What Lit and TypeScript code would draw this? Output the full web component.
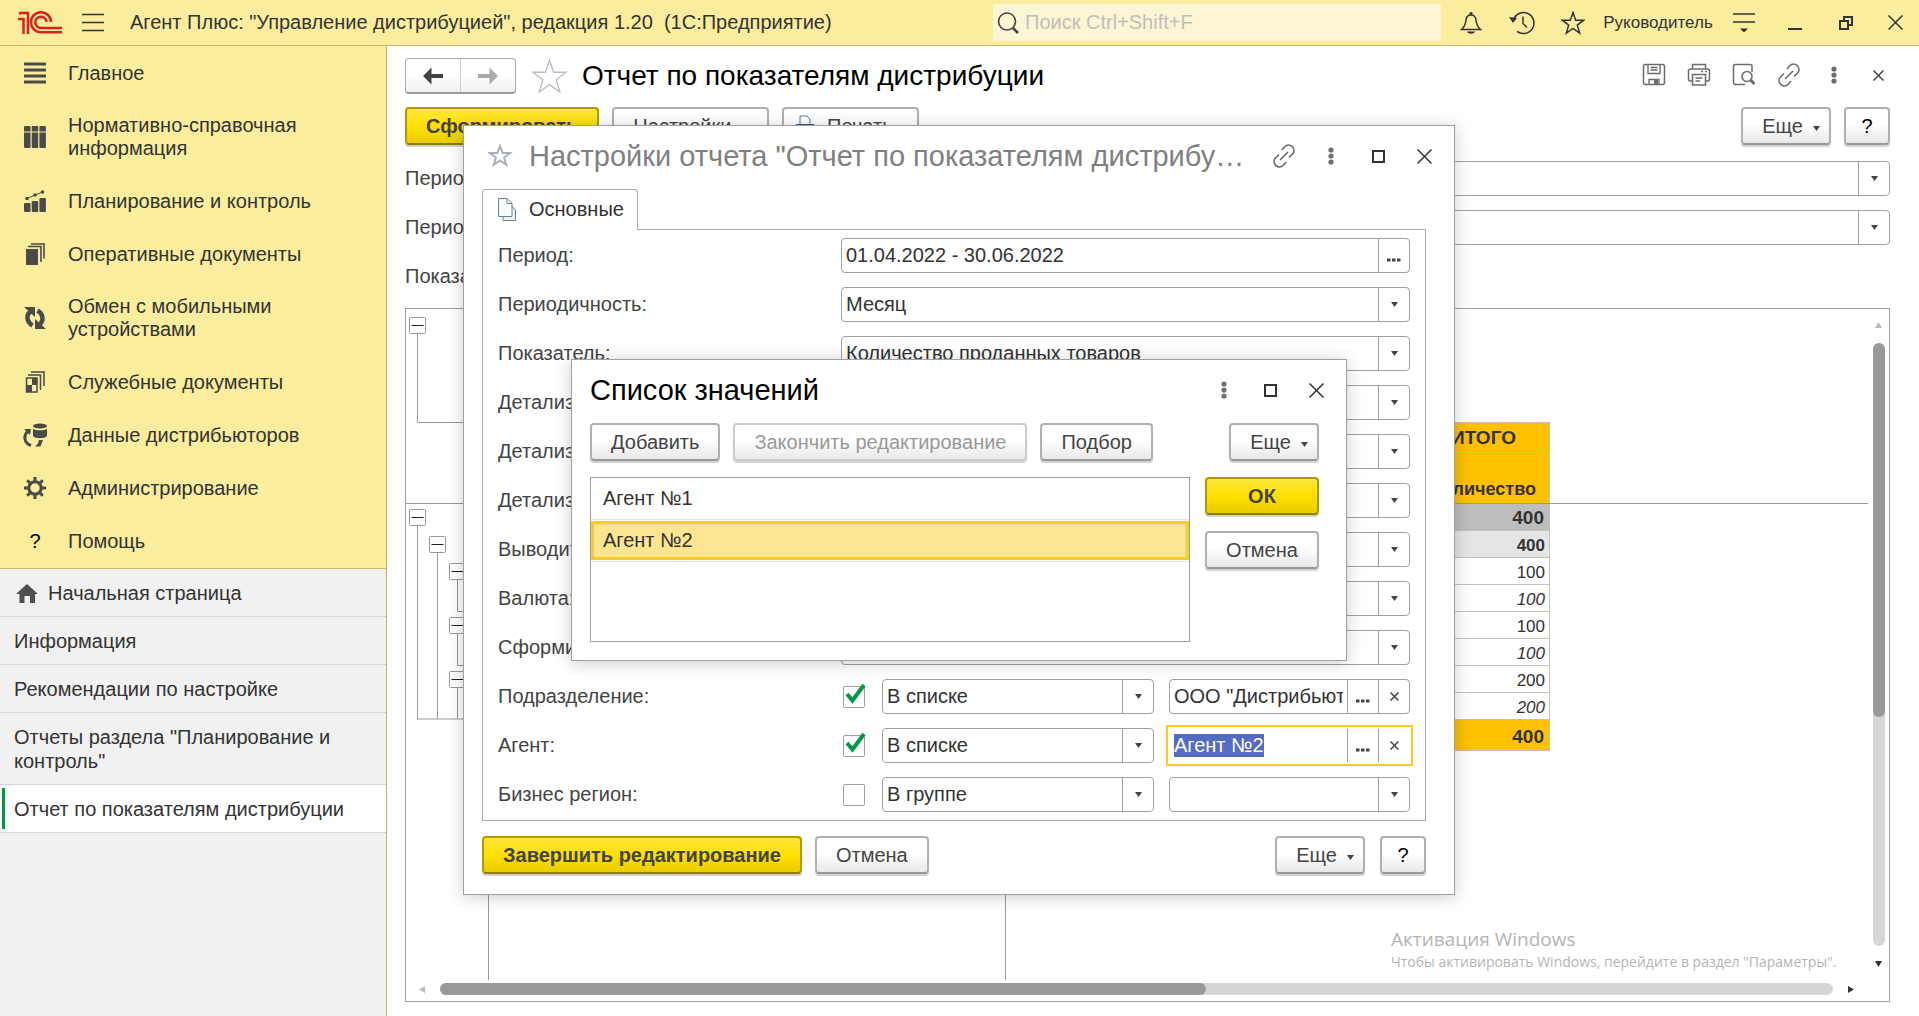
import { LitElement, html, svg, css, nothing, TemplateResult } from "lit";
import { customElement, query } from "lit/decorators.js";
import { classMap } from "lit/directives/class-map.js";

/* ---------- icons ---------- */

const icon = (w: number, h: number, body: unknown) => html`
  <svg class="icon" width=${w} height=${h} viewBox="0 0 ${w} ${h}" fill="none" stroke="currentColor" aria-hidden="true">${body}</svg>`;

const icons = {
  logo: () => icon(45, 24, svg`
    <g stroke="#d9211e" stroke-width="2.500">
      <path d="M0 8h5.500v15"/><path d="M1 3l1.500-1h7.500v21"/>
      <path d="M33 11a10 10 0 1 0-10 10.200h21"/>
      <path d="M28.500 11a5.600 5.600 0 1 0-5.500 5.900h21"/></g>`),
  menu: () => icon(22, 20, svg`<path d="M0 1.500h22M0 9.500h22M0 17.500h22" stroke-width="1.500"/>`),
  search: () => icon(24, 24, svg`<circle cx="10" cy="10.500" r="8.500" stroke-width="1.600"/><path d="M16 17l5 5" stroke-width="2.600"/>`),
  bell: () => icon(22, 24, svg`<path d="M1.500 18.500c3-2.500 4-5 4.500-9.500.400-3.500 2.500-5 5-5s4.600 1.500 5 5c.500 4.500 1.500 7 4.500 9.500z" stroke-width="1.500"/><circle cx="11" cy="2.600" r="1.600" fill="currentColor" stroke="none"/><path d="M7 20.500h8c-1 3-7 3-8 0z" fill="currentColor" stroke="none"/>`),
  history: () => icon(26, 24, svg`<path d="M5 7.500a10.500 10.500 0 1 1 3 12.800" stroke-width="1.500"/><path d="M14 5.500v7l4 4" stroke-width="1.500"/><path d="M0 6l8 1-4 5z" fill="currentColor" stroke="none"/>`),
  star: (size = 24, width = 1.5) => html`
    <svg class="icon" width=${size} height=${size} viewBox="0 0 24 24" fill="none" stroke="currentColor" stroke-width=${width} aria-hidden="true">
      <path d="M12 1.500l2.700 7.700h8l-6.400 4.900 2.400 8L12 17.300l-6.700 4.800 2.400-8L1.300 9.200h8z"/></svg>`,
  boldStar: () => icon(26, 26, svg`<path d="M13 3l2.600 7h7.400l-5.900 4.500 2.200 7.300-6.300-4.300-6.300 4.300 2.200-7.300L3 10h7.400z" stroke-width="2"/>`),
  panelMenu: () => icon(22, 22, svg`<path d="M0 2h22M0 10h22" stroke-width="1.500"/><path d="M7 16.500h8l-4 4z" fill="currentColor" stroke="none"/>`),
  minimize: () => icon(14, 16, svg`<path d="M0 14h14" stroke-width="2"/>`),
  restore: () => icon(14, 14, svg`<path d="M1 5h8v8H1zM5 5V1h8v8H9" stroke-width="2"/>`),
  maximize: () => icon(13, 13, svg`<path d="M1 1h11v11H1z" stroke-width="2"/>`),
  close: (s = 15) => icon(s, s, svg`<path d="M.5.5l${s - 1} ${s - 1}M${s - .5}.5l-${s - 1} ${s - 1}" stroke-width="1.500"/>`),
  dots: () => icon(6, 18, svg`<g fill="currentColor" stroke="none"><circle cx="3" cy="3" r="2.600"/><circle cx="3" cy="9" r="2.600"/><circle cx="3" cy="15" r="2.600"/></g>`),
  link: () => icon(24, 24, svg`<g stroke-width="1.600"><path d="M10 6l2.500-3c2.500-2.500 5.500-2.300 7.800-.300 2.200 2.200 2.300 5.300 0 7.600L17 13.500"/><path d="M14 18l-2.500 3c-2.500 2.500-5.500 2.300-7.800.300-2.200-2.200-2.300-5.300 0-7.600L7 10.500"/><path d="M8 16l8-8"/></g>`),
  save: () => icon(24, 24, svg`<rect x="1.500" y="1.500" width="21" height="20" rx="2" stroke-width="1.500"/><path d="M6 1.500v9h12v-9M8.500 4.500h7M8.500 7h7M7 21.500v-5h10v5" stroke-width="1.400"/><path d="M12 17h4v4h-4z" fill="currentColor" stroke="none"/>`),
  print: () => icon(24, 24, svg`<path d="M5.500 6V1.500h13V6M5 18H3.500a2 2 0 0 1-2-2V8a2 2 0 0 1 2-2h17a2 2 0 0 1 2 2v8a2 2 0 0 1-2 2H19" stroke-width="1.500"/><path d="M5.500 11.500h13v10.500h-13zM8.500 15h7M8.500 18h4.500M14 8.500h2M18 8.500h2" stroke-width="1.500"/>`),
  preview: () => icon(24, 24, svg`<path d="M20 9V3.500a2 2 0 0 0-2-2H3.500a2 2 0 0 0-2 2v16a2 2 0 0 0 2 2H13" stroke-width="1.500"/><circle cx="15" cy="13.500" r="5" stroke-width="1.600"/><path d="M18.500 17l4 4" stroke-width="3"/>`),
  arrowLeft: () => icon(22, 20, svg`<path d="M1 10L9.500 1.500V8H21v4H9.500v6.500z" fill="currentColor" stroke="none"/>`),
  arrowRight: () => icon(22, 20, svg`<path d="M21 10l-8.500-8.500V8H1v4h11.500v6.500z" fill="currentColor" stroke="none"/>`),
  caret: () => icon(7, 5, svg`<path d="M0 0h7l-3.500 5z" fill="currentColor" stroke="none"/>`),
  ellipsis: () => icon(14, 12, svg`<path d="M0 10h3.500M5 10h3.500M10 10h3.500" stroke-width="3"/>`),
  pages: () => icon(18, 23, svg`<path d="M5 7h7.500l5 5v10.500H5z" fill="#eef1f4" stroke="#6d7f91"/><path d="M.5.5H9l5 5v13H.5z" fill="#fafbfc" stroke="#6d7f91"/><path d="M9 .5v5h5" stroke="#6d7f91"/>`),
  printColor: () => icon(22, 22, svg`<path d="M6 10V1h7l3 3v6" fill="#fff" stroke="#5b7690"/><rect x="1" y="9" width="20" height="9" rx="2" fill="#2f5a86" stroke="none"/>`),
};

const navIcons: Record<string, () => TemplateResult> = {
  main: () => icon(22, 22, svg`<path d="M1 2h20M1 8h20M1 14h20M1 20h20" stroke-width="3" stroke-linecap="round"/>`),
  books: () => icon(22, 22, svg`<g fill="currentColor" stroke="none"><rect x="0" y="0" width="6.500" height="22" rx="1"/><rect x="7.700" y="0" width="6.500" height="22" rx="1"/><rect x="15.400" y="0" width="6.500" height="22" rx="1"/></g><path d="M0 6h22" stroke="#fbed9e"/>`),
  chart: () => icon(22, 22, svg`<g fill="currentColor" stroke="none"><rect x="0" y="13" width="6.500" height="9" rx="1"/><rect x="7.700" y="11" width="6.500" height="11" rx="1"/><rect x="15.400" y="8" width="6.500" height="14" rx="1"/><circle cx="3" cy="8.500" r="1.800"/><circle cx="11" cy="5" r="1.800"/><circle cx="18.500" cy="2" r="1.800"/></g><path d="M3 8.500L11 5l7.500-3"/>`),
  docs: () => icon(22, 22, svg`<path d="M2 6h12v16H2z" fill="currentColor" stroke="none"/><path d="M4 3.500h13V19M7 1h13v14.500" stroke-width="1.600"/>`),
  sync: () => icon(22, 22, svg`<path d="M7.500 4C2 7 2 14.500 8.500 18.500M14.500 18c5.500-3 5.500-10.500-1-14.500" stroke-width="4.500"/><path d="M0 0h11v10zM22 22H11V12z" fill="currentColor" stroke="none"/>`),
  service: () => icon(22, 22, svg`<path d="M2.500 7h10.500v14H2.500z" stroke-width="1.500"/><path d="M8 7h5v7H8zM2.500 14H8v7H2.500z" fill="currentColor" stroke="none"/><path d="M4 4h12.500v15M7 1h13v14" stroke-width="1.500"/>`),
  data: () => icon(24, 24, svg`<g fill="currentColor" stroke="none"><ellipse cx="17" cy="3" rx="7" ry="2.500"/><path d="M10 6c3 1.700 11 1.700 14 0v7c-2 3-12 3-14 0zM16 17h4l-2.500 6.500h-5.500l3-3z"/><path d="M1 6h7l-1 6z"/></g><path d="M5 8c-5 5-4 12 3 14.500" stroke-width="3"/>`),
  gear: () => icon(22, 22, svg`<circle cx="11" cy="11" r="6.200" stroke-width="3"/><path d="M11 0v4M11 18v4M0 11h4M18 11h4M3.200 3.200l2.900 2.900M15.900 15.900l2.900 2.900M18.800 3.200l-2.900 2.900M6.100 15.900l-2.900 2.900" stroke-width="3"/>`),
  help: () => html`<span class="mark">?</span>`,
  home: () => icon(22, 19, svg`<path d="M11 0l11 10h-3v9h-5v-7H8.500v7h-5v-9H0z" fill="currentColor" stroke="none"/>`),
};

/* ---------- shared styles ---------- */

const base = css`
  * { box-sizing: border-box; }
  :host { font: 20px/23px "Liberation Sans", Arial, sans-serif; color: #333; }
  button, input, select { font: inherit; color: inherit; margin: 0; }
  h1, h2 { margin: 0; font-weight: 400; white-space: nowrap; }
  .icon { display: block; flex: none; }
  .ghost { display: flex; align-items: center; justify-content: center; padding: 0; border: 0; background: none; color: #333; }
  .btn {
    display: flex; align-items: center; justify-content: center; gap: 10px;
    height: 38px; padding: 0 19px; white-space: nowrap; color: #444;
    border: 2px solid #b0b0b0; border-bottom-color: #999; border-radius: 4px;
    background: linear-gradient(#fff 45%, #e8e8e8); box-shadow: 0 2px 1px #d0d0d0;
  }
  .btn.primary { font-weight: 700; border-color: #b09a00; border-bottom-color: #8f7d00; background: linear-gradient(#ffe83c, #ffe000 50%, #e8cd00); }
  .btn:disabled { color: #999; border-color: #ccc; }
  .btn.more { width: 90px; padding: 0 8px 0 18px; }
  .btn.more .icon { margin-top: 4px; }
  .btn.ask { width: 46px; padding: 0; color: #000; }
  .field {
    display: grid; grid-template-columns: minmax(0, 1fr); grid-auto-flow: column; grid-auto-columns: 31px;
    height: 35px; min-width: 0; border: 1px solid #a0a0a0; border-radius: 4px; background: #fff;
  }
  .field input, .field select { grid-row: 1; grid-column: 1; width: 100%; min-width: 0; height: 100%; padding: 0 4px; border: 0; outline: 0; background: none; appearance: none; }
  .field.pick { grid-template-columns: minmax(0, 1fr) 31px; }
  .field.pick select { grid-column: 1 / 3; }
  .cell { display: grid; place-items: center; padding: 0; border: 0; border-left: 1px solid #a0a0a0; background: none; color: #444; }
  .field.pick .cell { grid-row: 1; grid-column: 2; pointer-events: none; }
  .dialog { background: #fff; border: 1px solid #a0a0a0; box-shadow: 0 2px 16px rgba(0, 0, 0, .2); }
`;

const pick = (id: string, value = "") => html`
  <div class="field pick">
    <select id=${id} aria-label=${value || id}><option>${value}</option></select>
    <span class="cell">${icons.caret()}</span>
  </div>`;

const moreButton = () => html`<button class="btn more">Еще ${icons.caret()}</button>`;

/* ---------- top bar ---------- */

@customElement("top-bar")
export class TopBar extends LitElement {
  static styles = [base, css`
    :host { display: flex; align-items: center; height: 46px; background: #fbed9e; border-bottom: 1px solid #c9b85f; }
    .logo { margin-left: 18px; }
    .burger { margin-left: 19px; }
    .name { flex: 1; margin-left: 26px; white-space: nowrap; }
    .search { display: flex; align-items: center; gap: 4px; flex: 0 1 448px; height: 37px; margin-right: 4px; padding-left: 4px; border-radius: 2px; background: #fdf6d6; color: #444; }
    .search input { flex: 1; min-width: 0; padding: 0; border: 0; outline: 0; background: none; }
    .search input::placeholder { color: #bfbfb8; opacity: 1; }
    .tool { width: 51px; height: 45px; }
    .tool.last { width: 48px; }
    .user { width: 120px; text-align: center; font-size: 17px; color: #333; text-decoration: none; }
  `];
  render() {
    return html`
      <span class="logo">${icons.logo()}</span>
      <button class="ghost burger" aria-label="Меню">${icons.menu()}</button>
      <span class="name">Агент Плюс: "Управление дистрибуцией", редакция 1.20&nbsp; (1С:Предприятие)</span>
      <label class="search">${icons.search()}<input type="search" placeholder="Поиск Ctrl+Shift+F"></label>
      <button class="ghost tool" aria-label="Оповещения">${icons.bell()}</button>
      <button class="ghost tool" aria-label="История">${icons.history()}</button>
      <button class="ghost tool" aria-label="Избранное">${icons.star()}</button>
      <a class="user" href="#user">Руководитель</a>
      <button class="ghost tool" aria-label="Сервис">${icons.panelMenu()}</button>
      <button class="ghost tool" aria-label="Свернуть">${icons.minimize()}</button>
      <button class="ghost tool" aria-label="Восстановить">${icons.restore()}</button>
      <button class="ghost tool last" aria-label="Закрыть">${icons.close()}</button>`;
  }
}

/* ---------- sidebar ---------- */

const SECTIONS = [
  ["main", "Главное"], ["books", "Нормативно-справочная информация"], ["chart", "Планирование и контроль"],
  ["docs", "Оперативные документы"], ["sync", "Обмен с мобильными устройствами"], ["service", "Служебные документы"],
  ["data", "Данные дистрибьюторов"], ["gear", "Администрирование"], ["help", "Помощь"],
];
const WINDOWS = [
  { text: "Начальная страница", home: true }, { text: "Информация" }, { text: "Рекомендации по настройке" },
  { text: 'Отчеты раздела "Планирование и контроль"' }, { text: "Отчет по показателям дистрибуции", active: true },
];

@customElement("side-bar")
export class SideBar extends LitElement {
  static styles = [base, css`
    :host { display: block; width: 387px; border-right: 1px solid #c4b25a; background: #f1f1f1; }
    a { color: inherit; text-decoration: none; }
    .sections { padding-top: 1px; background: #fbed9e; border-bottom: 1px solid #c9b85f; }
    .section { display: grid; grid-template-columns: 24px 1fr; column-gap: 21px; align-items: center; min-height: 53px; padding: 14px 60px 15px 23px; }
    .section .icon, .mark { justify-self: center; color: #4a4a4a; }
    .mark { color: #000; }
    .window { display: flex; align-items: center; gap: 10px; min-height: 48px; padding: 12px 14px 11px; line-height: 24px; border-bottom: 1px solid #d5d5d5; }
    .window .icon { margin-left: 2px; color: #4f4f4f; }
    .window.active { background: linear-gradient(#009a46, #009a46) 2px 3px / 3px 41px no-repeat #fff; }
  `];
  render() {
    return html`
      <nav class="sections">
        ${SECTIONS.map(([key, text]) => html`<a class="section" href="#${key}">${navIcons[key]()}<span>${text}</span></a>`)}
      </nav>
      <nav>
        ${WINDOWS.map((w, i) => html`
          <a class=${classMap({ window: true, active: !!w.active })} href="#window-${i}">
            ${w.home ? navIcons.home() : nothing}<span>${w.text}</span></a>`)}
      </nav>`;
  }
}

/* ---------- report page ---------- */

const ROWS = [
  ["400", "group"], ["400", "subgroup"], ["100", ""], ["100", "detail"],
  ["100", ""], ["100", "detail"], ["200", ""], ["200", "detail"], ["400", "total"],
];

const node = (x: number, y: number) => svg`
  <rect x=${x - 8} y=${y - 8} width="16" height="16" rx="1" fill="#fff" stroke="#999"/>
  <path d="M${x - 6} ${y}h12" stroke="#222"/>`;

@customElement("report-page")
export class ReportPage extends LitElement {
  static styles = [base, css`
    :host { display: flex; flex-direction: column; min-width: 0; padding: 12px 29px 14px 18px; background: #fff; }
    .head { display: flex; align-items: center; height: 36px; }
    .nav { display: flex; width: 111px; height: 36px; border: 1px solid #aaa; border-bottom: 2px solid #999; border-radius: 4px; background: linear-gradient(#fff 50%, #f0f0f0); }
    .nav button { flex: 1; color: #444; }
    .nav button + button { border-left: 1px solid #ccc; color: #aaa; }
    .fav { margin: 0 14px 0 15px; color: #b8bfc8; }
    h1 { flex: 1; font-size: 28px; line-height: 36px; color: #000; }
    .tool { align-self: flex-start; width: 45px; height: 34px; color: #6c6c6c; }
    .tool.last { color: #444; margin-right: -11px; }
    .commands { display: flex; gap: 13px; margin: 13px 0 16px; }
    .commands .gap { flex: 1; }
    .commands .print { padding: 0 24px 0 10px; gap: 11px; }
    .param { display: grid; grid-template-columns: 250px 1fr; align-items: center; height: 35px; margin-bottom: 14px; color: #444; }
    .sheet { flex: 1; display: grid; grid-template: minmax(0, 1fr) 21px / minmax(0, 1fr) 21px; min-height: 0; border: 1px solid #a0a0a0; }
    .canvas { position: relative; display: flex; align-items: flex-start; overflow: hidden; }
    .outline { flex: none; }
    .frozen-row { position: absolute; left: 0; right: 0; top: 194px; border-top: 1px solid #999; }
    .frozen-col { position: absolute; top: 0; bottom: 0; border-left: 1px solid #999; }
    .frozen-col.first { left: 82px; }
    .frozen-col.second { left: 599px; }
    table { width: 133px; margin: 113px 0 0 928px; border-collapse: collapse; font-size: 17px; line-height: 20px; }
    th, td { height: 27px; padding: 4px 4px 1px; border: 1px solid #c8c0b4; text-align: right; }
    th { background: #ffc000; font-size: 19px; text-align: center; }
    th.measure { height: 54px; font-size: 18px; vertical-align: bottom; padding-bottom: 4px; }
    .group td { background: #bdbdbd; font-size: 19px; font-weight: 700; padding: 3px 5px 2px; }
    .subgroup td { background: #e5e5e5; font-weight: 700; }
    .detail td { font-style: italic; }
    .total td { height: 31px; background: #ffc000; font-size: 19px; font-weight: 700; padding-right: 5px; }
    .vbar, .hbar { display: flex; align-items: center; color: #333; }
    .vbar { flex-direction: column; grid-row: 1; grid-column: 2; padding: 13px 0 13px; gap: 15px; }
    .hbar { grid-row: 2; grid-column: 1; padding: 0 14px 3px 13px; gap: 15px; }
    .track { flex: 1; display: flex; border-radius: 6px; background: #d6d6d6; }
    .vbar .track { width: 12px; flex-direction: column; }
    .hbar .track { height: 12px; }
    .thumb { border-radius: 6px; background: #999; }
    .vbar .thumb { height: 62%; }
    .hbar .thumb { width: 55%; }
    .dim { color: #bbb; }
    .notice { position: absolute; left: 985px; bottom: 8px; font-family: "Open Sans", "Noto Sans", sans-serif; color: #b4b4b4; white-space: nowrap; }
    .notice p { margin: 0; font-size: 19px; line-height: 26px; }
    .notice p + p { font-size: 14px; line-height: 20px; }
  `];
  render() {
    return html`
      <header class="head">
        <div class="nav">
          <button class="ghost" aria-label="Назад">${icons.arrowLeft()}</button>
          <button class="ghost" aria-label="Вперед">${icons.arrowRight()}</button>
        </div>
        <button class="ghost fav" aria-label="Избранное">${icons.star(37, 0.9)}</button>
        <h1>Отчет по показателям дистрибуции</h1>
        <button class="ghost tool" aria-label="Сохранить">${icons.save()}</button>
        <button class="ghost tool" aria-label="Печать">${icons.print()}</button>
        <button class="ghost tool" aria-label="Просмотр">${icons.preview()}</button>
        <button class="ghost tool" aria-label="Ссылка">${icons.link()}</button>
        <button class="ghost tool" aria-label="Действия">${icons.dots()}</button>
        <button class="ghost tool last" aria-label="Закрыть">${icons.close(11)}</button>
      </header>
      <div class="commands">
        <button class="btn primary">Сформировать</button>
        <button class="btn">Настройки...</button>
        <button class="btn print">${icons.printColor()}Печать</button>
        <span class="gap"></span>
        ${moreButton()}
        <button class="btn ask">?</button>
      </div>
      <div class="param"><label for="page-period">Период:</label>${pick("page-period")}</div>
      <div class="param"><label for="page-step">Периодичность:</label>${pick("page-step")}</div>
      <div class="param"><span>Показатель:</span></div>
      <section class="sheet">
        <div class="canvas">
          <svg class="outline" width="83" height="420" fill="none" stroke="#999" aria-hidden="true">
            <path d="M11.500 16.500v97H83M11.500 208.500v201.500H83M31.500 235.500v174.500M51.500 262.500v40H83M51.500 316.500v40H83M51.500 370.500v39"/>
            ${[[11.5, 16.5], [11.5, 208.5], [31.5, 235.5], [51.5, 262.5], [51.5, 316.5], [51.5, 370.5]].map(([x, y]) => node(x, y))}
          </svg>
          <table>
            <thead><tr><th>ИТОГО</th></tr><tr><th class="measure">Количество</th></tr></thead>
            <tbody>${ROWS.map(([value, kind]) => html`<tr class=${kind}><td>${value}</td></tr>`)}</tbody>
          </table>
          <span class="frozen-row"></span><span class="frozen-col first"></span><span class="frozen-col second"></span>
          <div class="notice"><p>Активация Windows</p><p>Чтобы активировать Windows, перейдите в раздел "Параметры".</p></div>
        </div>
        <div class="vbar">
          <svg class="icon dim" width="7" height="6"><path d="M0 6h7L3.500 0z" fill="currentColor"/></svg>
          <div class="track"><div class="thumb"></div></div>
          <svg class="icon" width="7" height="6"><path d="M0 0h7L3.500 6z" fill="currentColor"/></svg>
        </div>
        <div class="hbar">
          <svg class="icon dim" width="6" height="7"><path d="M6 0v7L0 3.500z" fill="currentColor"/></svg>
          <div class="track"><div class="thumb"></div></div>
          <svg class="icon" width="6" height="7"><path d="M0 0v7l6-3.500z" fill="currentColor"/></svg>
        </div>
      </section>`;
  }
}

/* ---------- report settings ---------- */

const SETTINGS = [
  ["step", "Периодичность:", "Месяц"], ["measure", "Показатель:", "Количество проданных товаров"],
  ["detail1", "Детализация 1:", ""], ["detail2", "Детализация 2:", ""], ["detail3", "Детализация 3:", ""],
  ["output", "Выводить:", ""], ["currency", "Валюта:", ""], ["build", "Сформировать:", ""],
];
const FILTERS = [
  { id: "unit", label: "Подразделение:", on: true, mode: "В списке", value: 'ООО "Дистрибьютор"' },
  { id: "agent", label: "Агент:", on: true, mode: "В списке", value: "Агент №2", current: true },
  { id: "region", label: "Бизнес регион:", on: false, mode: "В группе" },
];

@customElement("settings-dialog")
export class SettingsDialog extends LitElement {
  @query(".current input") current!: HTMLInputElement;
  static styles = [base, css`
    :host { display: block; width: 992px; padding: 12px 28px 20px 18px; }
    .title { display: flex; align-items: center; height: 36px; margin-right: -21px; }
    .title .fav { margin: 0 16px 0 5px; color: #a9b0b8; }
    h2 { flex: 1; min-width: 0; overflow: hidden; text-overflow: ellipsis; font-size: 29px; line-height: 36px; color: #808080; }
    .tool { width: 46px; height: 36px; }
    .tool.link { margin-left: 14px; color: #666; }
    .tool.dots { color: #707070; width: 48px; }
    .tabs { display: flex; margin-top: 15px; }
    .tab { display: flex; gap: 13px; align-items: center; width: 156px; height: 41px; margin-bottom: -1px; padding: 0 15px 2px; border: 1px solid #aaa; border-bottom: 0; border-radius: 4px 4px 0 0; background: #fff; z-index: 1; }
    .panel { display: grid; row-gap: 14px; padding: 8px 15px; border: 1px solid #aaa; }
    .row { display: grid; grid-template-columns: 343px minmax(0, 1fr); align-items: center; height: 35px; color: #444; }
    .row .field { color: #333; }
    .filter { display: grid; grid-template-columns: 24px 272px minmax(0, 1fr); column-gap: 17px; align-items: center; }
    .filter .field:last-child { margin-left: -2px; }
    .check { display: grid; grid-template: 22px / 22px; place-items: end center; justify-self: end; width: 22px; height: 22px; }
    .check input { grid-area: 1 / 1; appearance: none; width: 22px; height: 22px; margin: 0; border: 1px solid #a0a0a0; border-radius: 2px; }
    .check svg { grid-area: 1 / 1; pointer-events: none; overflow: visible; }
    .current { border-color: transparent; outline: 2px solid #f8cb28; outline-offset: 1px; border-radius: 0; }
    .current input::selection { background: rgba(82, 106, 196, .995); color: #fff; }
    .foot { display: flex; gap: 13px; margin-top: 15px; }
    .foot .gap { flex: 1; }
    .foot .ask { margin-left: 2px; }
  `];
  firstUpdated() {
    this.current.focus();
    this.current.select();
  }
  render() {
    return html`
      <header class="title">
        <button class="ghost fav" aria-label="Избранное">${icons.boldStar()}</button>
        <h2>Настройки отчета "Отчет по показателям дистрибуции"</h2>
        <button class="ghost tool link" aria-label="Ссылка">${icons.link()}</button>
        <button class="ghost tool dots" aria-label="Действия">${icons.dots()}</button>
        <button class="ghost tool" aria-label="Развернуть">${icons.maximize()}</button>
        <button class="ghost tool" aria-label="Закрыть">${icons.close()}</button>
      </header>
      <div class="tabs"><button class="tab">${icons.pages()}Основные</button></div>
      <div class="panel">
        <div class="row">
          <label for="period">Период:</label>
          <div class="field"><input id="period" value="01.04.2022 - 30.06.2022"><button class="cell" aria-label="Выбрать">${icons.ellipsis()}</button></div>
        </div>
        ${SETTINGS.map(([id, label, value]) => html`<div class="row"><label for=${id}>${label}</label>${pick(id, value)}</div>`)}
        ${FILTERS.map((f) => html`
          <div class="row">
            <label for=${f.id}>${f.label}</label>
            <div class="filter">
              <span class="check">
                <input type="checkbox" id=${f.id} .checked=${f.on}>
                ${f.on ? html`<svg width="22" height="26" viewBox="0 0 22 26" fill="none"><path d="M4 12l5.500 6.500L21 3" stroke="#009a46" stroke-width="4"/></svg>` : nothing}
              </span>
              ${pick(f.id + "-mode", f.mode)}
              ${f.value ? html`
                <div class=${classMap({ field: true, current: !!f.current })}>
                  <input value=${f.value} aria-label=${f.label}>
                  <button class="cell" aria-label="Выбрать">${icons.ellipsis()}</button>
                  <button class="cell" aria-label="Очистить">${icons.close(9)}</button>
                </div>` : pick(f.id + "-value")}
            </div>
          </div>`)}
      </div>
      <footer class="foot">
        <button class="btn primary">Завершить редактирование</button>
        <button class="btn">Отмена</button>
        <span class="gap"></span>
        ${moreButton()}
        <button class="btn ask">?</button>
      </footer>`;
  }
}

/* ---------- value list ---------- */

@customElement("values-dialog")
export class ValuesDialog extends LitElement {
  static styles = [base, css`
    :host { display: block; width: 776px; padding: 12px 27px 18px 18px; }
    .title { display: flex; align-items: center; height: 36px; margin-right: -20px; }
    h2 { flex: 1; font-size: 29px; line-height: 36px; color: #000; }
    .tool { width: 46px; height: 36px; }
    .tool.dots { color: #707070; }
    .commands { display: flex; gap: 13px; margin: 15px 0 16px; }
    .commands .gap { flex: 1; }
    .body { display: grid; grid-template-columns: minmax(0, 1fr) 114px; column-gap: 15px; }
    .list { height: 165px; margin: 0; padding: 0; list-style: none; border: 1px solid #a0a0a0; }
    .item { display: flex; height: 42px; padding-bottom: 1px; border-bottom: 1px solid #e4e4e4; }
    .item button { flex: 1; padding: 0 12px; border: 0; background: none; text-align: left; }
    .item.selected { padding-top: 1px; }
    .item.selected button { padding: 0 9px; border: 3px solid #f8cb28; background: #fde592; }
    .actions { display: grid; row-gap: 16px; align-content: start; }
  `];
  render() {
    return html`
      <header class="title">
        <h2>Список значений</h2>
        <button class="ghost tool dots" aria-label="Действия">${icons.dots()}</button>
        <button class="ghost tool" aria-label="Развернуть">${icons.maximize()}</button>
        <button class="ghost tool" aria-label="Закрыть">${icons.close()}</button>
      </header>
      <div class="commands">
        <button class="btn">Добавить</button>
        <button class="btn" disabled>Закончить редактирование</button>
        <button class="btn">Подбор</button>
        <span class="gap"></span>
        ${moreButton()}
      </div>
      <div class="body">
        <ul class="list">
          <li class="item"><button>Агент №1</button></li>
          <li class="item selected"><button>Агент №2</button></li>
        </ul>
        <div class="actions">
          <button class="btn primary">ОК</button>
          <button class="btn">Отмена</button>
        </div>
      </div>`;
  }
}

/* ---------- application ---------- */

@customElement("app-root")
export class AppRoot extends LitElement {
  static styles = [base, css`
    :host { position: relative; display: flex; flex-direction: column; height: 100vh; min-height: 900px; overflow: hidden; background: #fff; }
    .work { flex: 1; display: flex; min-height: 0; }
    side-bar { flex: none; }
    report-page { flex: 1; }
    .desktop { position: absolute; inset: 0; display: grid; place-items: center; padding: 4px 1px 0 0; }
    .desktop > * { grid-area: 1 / 1; }
  `];
  render() {
    return html`
      <top-bar></top-bar>
      <div class="work"><side-bar></side-bar><report-page></report-page></div>
      <div class="desktop">
        <settings-dialog class="dialog"></settings-dialog>
        <values-dialog class="dialog"></values-dialog>
      </div>`;
  }
}
